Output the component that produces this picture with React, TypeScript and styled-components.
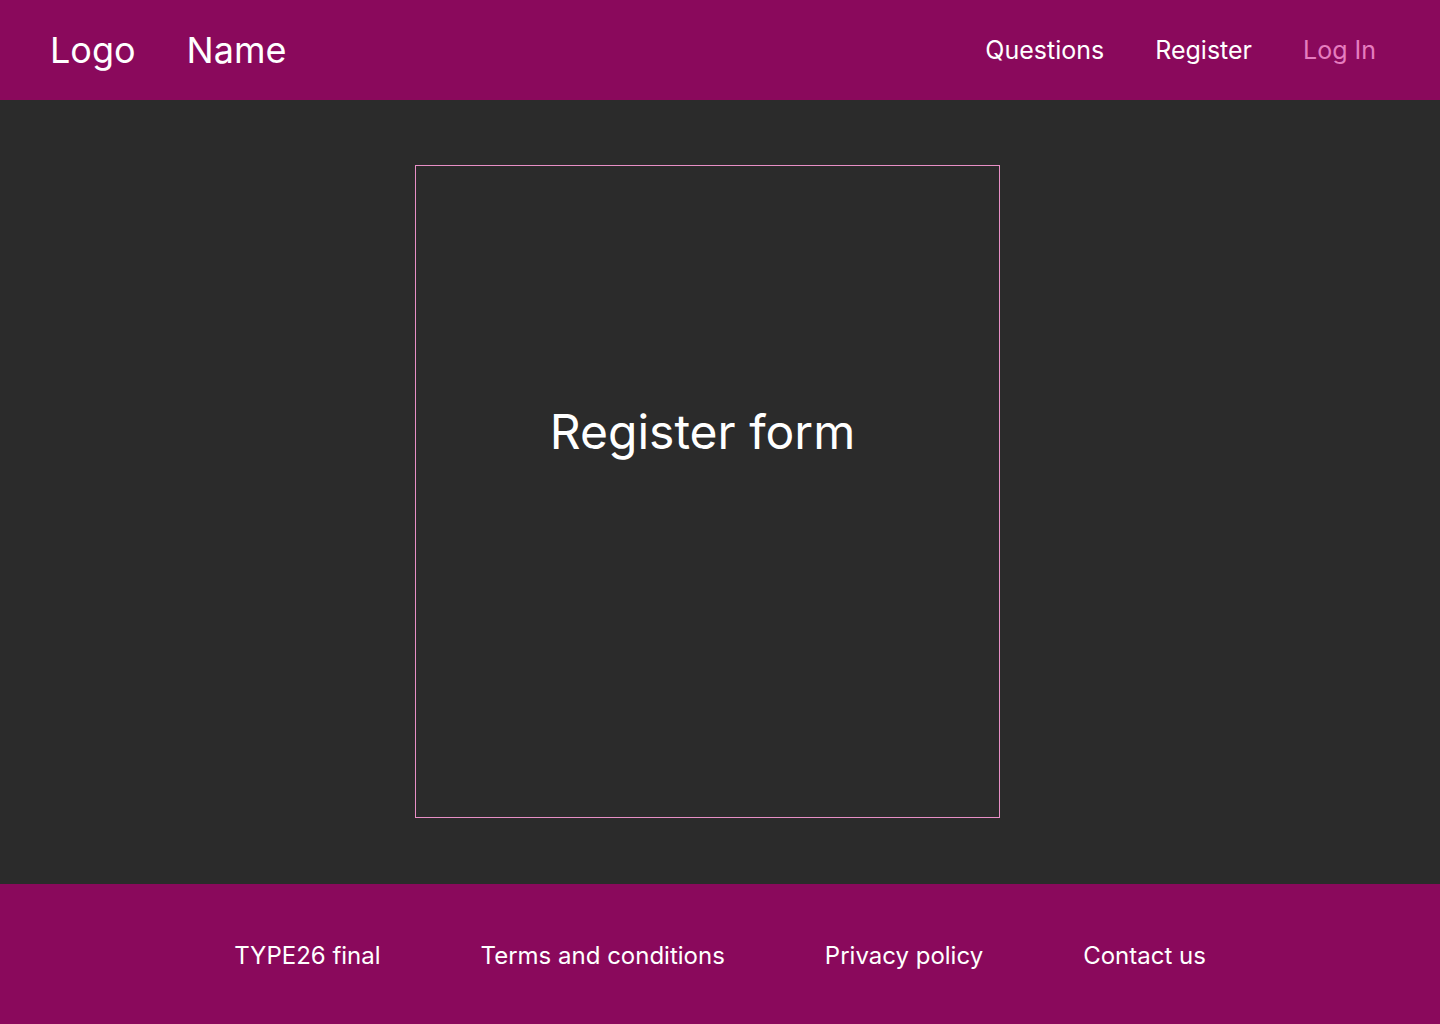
import React from "react";
import styled, { createGlobalStyle } from "styled-components";

const GlobalStyle = createGlobalStyle`
  html, body {
    margin: 0;
    padding: 0;
    background: #2b2b2b;
  }
  body {
    font-family: Inter, "Noto Sans", sans-serif;
    color: #ffffff;
  }
  * { box-sizing: border-box; }
`;

const Page = styled.div`
  display: flex;
  flex-direction: column;
  min-height: 1024px;
  width: 1440px;
`;

const Header = styled.header`
  height: 100px;
  background: #8a095c;
  display: flex;
  align-items: center;
  justify-content: space-between;
  padding: 0 64px 0 50px;
`;

const Brand = styled.div`
  display: flex;
  align-items: center;
  gap: 51px;
  font-size: 36px;
  font-weight: 400;
  color: #ffffff;
`;

const Nav = styled.nav`
  display: flex;
  align-items: center;
  gap: 51px;
`;

const NavLink = styled.a<{ $muted?: boolean }>`
  font-size: 25px;
  color: ${(p) => (p.$muted ? "#e57cbf" : "#ffffff")};
  text-decoration: none;
  cursor: pointer;
`;

const Main = styled.main`
  height: 784px;
  display: flex;
  align-items: flex-start;
  padding: 65px 0 0 415px;
`;

const FormBox = styled.section`
  width: 585px;
  height: 653px;
  border: 1px solid #e88fc6;
  display: flex;
  justify-content: center;
  padding-top: 237px;
  padding-right: 10px;
`;

const FormTitle = styled.h1`
  margin: 0;
  font-size: 48px;
  font-weight: 400;
  line-height: 58px;
  color: #ffffff;
`;

const Footer = styled.footer`
  height: 140px;
  background: #8a095c;
  display: flex;
  align-items: center;
  justify-content: center;
  gap: 100px;
  padding-top: 2px;
`;

const FooterLink = styled.a`
  font-size: 24px;
  color: #ffffff;
  text-decoration: none;
  cursor: pointer;
`;

export default function App() {
  return (
    <>
      <GlobalStyle />
      <Page>
        <Header>
          <Brand>
            <span>Logo</span>
            <span>Name</span>
          </Brand>
          <Nav>
            <NavLink>Questions</NavLink>
            <NavLink>Register</NavLink>
            <NavLink $muted>Log In</NavLink>
          </Nav>
        </Header>
        <Main>
          <FormBox>
            <FormTitle>Register form</FormTitle>
          </FormBox>
        </Main>
        <Footer>
          <FooterLink>TYPE26 final</FooterLink>
          <FooterLink>Terms and conditions</FooterLink>
          <FooterLink>Privacy policy</FooterLink>
          <FooterLink>Contact us</FooterLink>
        </Footer>
      </Page>
    </>
  );
}
